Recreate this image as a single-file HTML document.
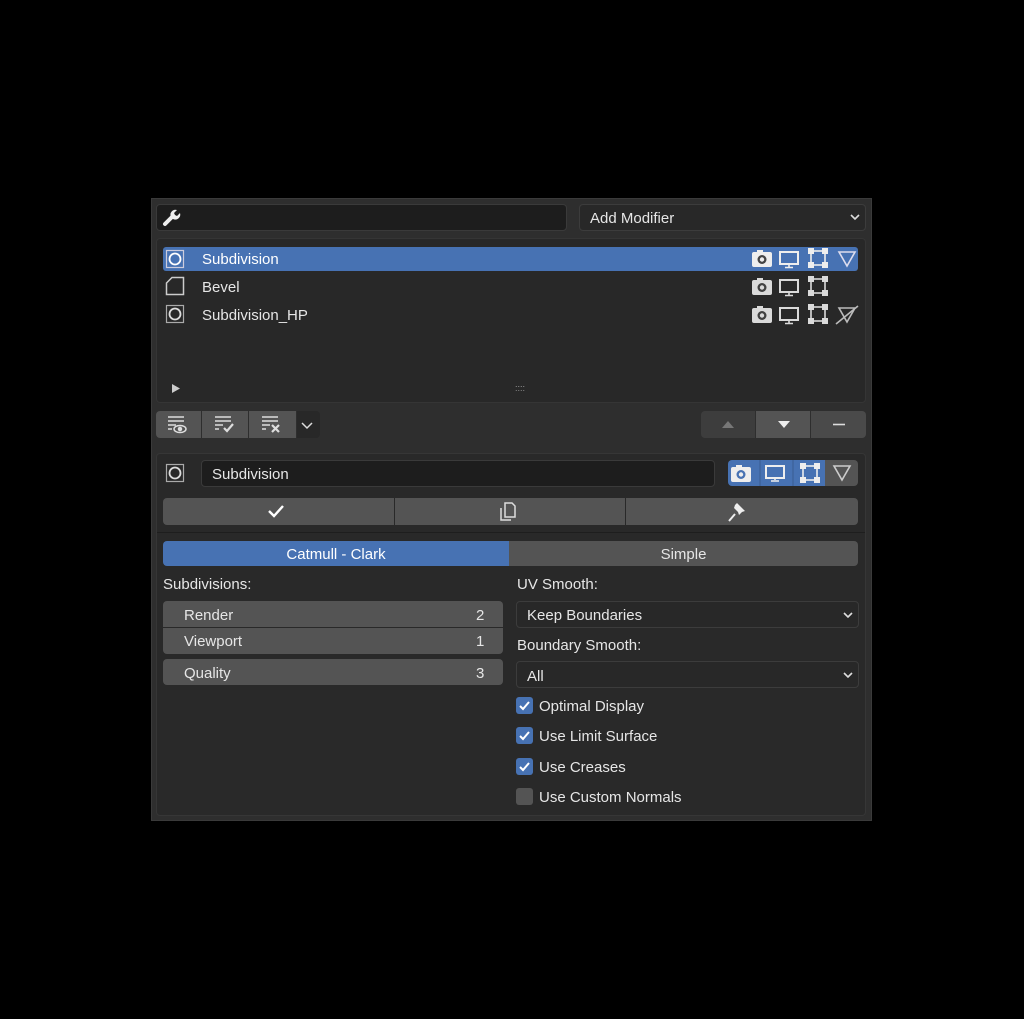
<!DOCTYPE html>
<html><head><style>
body{margin:0;width:1024px;height:1019px;background:#000;position:relative;font-family:"Liberation Sans",sans-serif;color:#e6e6e6;font-size:15px;overflow:hidden}
div{position:absolute;box-sizing:border-box}
.t{white-space:nowrap;line-height:1;margin-top:1px}
.btn{background:#545454;border-radius:4px}
.dk{background:#1d1d1d;border-radius:4px;border:1px solid #3a3a3a}
.dd{background:#282828;border-radius:4px;border:1px solid #3c3c3c}
.blue{background:#4772b3}
svg{position:absolute}
.cb{width:17px;height:17px;border-radius:3px;background:#4772b3}
</style></head><body>
<div style="left:151px;top:198px;width:721px;height:623px;background:#2e2e2e;border:1px solid #3a3a3a"></div>
<div class="dk" style="left:156px;top:204px;width:411px;height:27px"></div>
<svg style="left:162px;top:207px" width="20" height="20" viewBox="0 0 20 20"><path d="M3 17 L10 10" stroke="#eee" stroke-width="4" stroke-linecap="round"/><path d="M9 10 a5 5 0 0 1 6-7 l-3 3 1 2 2 1 3-3 a5 5 0 0 1-7 6z" fill="#eee"/></svg>
<div class="dd" style="left:579px;top:204px;width:287px;height:27px"></div>
<div class="t" style="left:590px;top:210px">Add Modifier</div>
<svg style="left:850px;top:213px" width="10" height="8"><path d="M1 2 L5 6 L9 2" stroke="#ddd" stroke-width="1.6" fill="none"/></svg>
<div style="left:156px;top:238px;width:710px;height:165px;background:#282828;border-radius:4px;border:1px solid #353535"></div>
<div class="blue" style="left:163px;top:247px;width:695px;height:24px;border-radius:3px"></div>
<svg style="left:165px;top:249px" width="20" height="20"><rect x="1.5" y="1.5" width="17" height="17" fill="none" stroke="#ccd" stroke-width="1.2"/><circle cx="10" cy="10" r="5.5" fill="none" stroke="#fff" stroke-width="1.8"/></svg>
<svg style="left:165px;top:276px" width="20" height="20"><path d="M7 1.5 H18.5 V18.5 H1.5 V7 Z" fill="none" stroke="#ccc" stroke-width="1.5"/></svg>
<svg style="left:165px;top:304px" width="20" height="20"><rect x="1.5" y="1.5" width="17" height="17" fill="none" stroke="#aaa" stroke-width="1.2"/><circle cx="10" cy="10" r="5.5" fill="none" stroke="#ddd" stroke-width="1.8"/></svg>
<div class="t" style="left:202px;top:251px;color:#fff">Subdivision</div>
<div class="t" style="left:202px;top:279px">Bevel</div>
<div class="t" style="left:202px;top:307px">Subdivision_HP</div>
<svg style="left:750px;top:248px" width="112" height="80">
<g id="r"><rect x="2" y="4" width="20" height="15" rx="2" fill="#eee"/><rect x="7" y="2" width="6" height="3" fill="#eee"/><circle cx="12" cy="11.5" r="4.5" fill="#444"/><circle cx="12" cy="11.5" r="2.2" fill="#eee"/>
<rect x="30" y="4" width="18" height="12" fill="none" stroke="#eee" stroke-width="2"/><path d="M39 16v3M35 19.5h8" stroke="#eee" stroke-width="1.6"/>
<rect x="61" y="3" width="14" height="14" fill="none" stroke="#eee" stroke-width="1.6"/><g fill="#eee"><rect x="58" y="0" width="6" height="6"/><rect x="72" y="0" width="6" height="6"/><rect x="58" y="14" width="6" height="6"/><rect x="72" y="14" width="6" height="6"/></g></g>
<path d="M89 4 L105 4 L97 18 Z" fill="none" stroke="#dde" stroke-width="1.6"/>
<use href="#r" y="28" opacity="0.9"/>
<use href="#r" y="56" opacity="0.9"/>
<path d="M89 60 L105 60 L97 74 Z M86 76 L108 58" fill="none" stroke="#bbb" stroke-width="1.6"/>
</svg>
<svg style="left:172px;top:384px" width="8" height="9"><path d="M0 0 L8 4.5 L0 9Z" fill="#ccc"/></svg>
<div class="t" style="left:515px;top:383px;font-size:9px;color:#999">::::</div>
<div class="btn" style="left:156px;top:411px;width:45px;height:27px;border-radius:4px 0 0 4px"></div>
<div class="btn" style="left:202px;top:411px;width:46px;height:27px;border-radius:0"></div>
<div class="btn" style="left:249px;top:411px;width:47px;height:27px;border-radius:0"></div>
<div style="left:297px;top:411px;width:23px;height:27px;background:#282828;border-radius:0 4px 4px 0"></div>
<svg style="left:166px;top:414px" width="150" height="22" stroke="#ddd" stroke-width="1.5" fill="none">
<path d="M2 3h16M2 7h16M2 11h8M2 15h4"/><ellipse cx="14" cy="15" rx="6" ry="3.5"/><circle cx="14" cy="15" r="1.5" fill="#ddd"/>
<path d="M49 3h16M49 7h16M49 11h8M49 15h4"/><path d="M58 14l3 3 6-7" stroke-width="2.2"/>
<path d="M96 3h16M96 7h16M96 11h8M96 15h4"/><path d="M106 11l7 7M113 11l-7 7" stroke-width="2.2"/>
<path d="M136 9l5 5 5-5"/></svg>
<div class="btn" style="left:701px;top:411px;width:54px;height:27px;border-radius:4px 0 0 4px;background:#3d3d3d"></div>
<div class="btn" style="left:756px;top:411px;width:54px;height:27px;border-radius:0"></div>
<div class="btn" style="left:811px;top:411px;width:55px;height:27px;border-radius:0 4px 4px 0;background:#4a4a4a"></div>
<svg style="left:701px;top:411px" width="165" height="27"><path d="M21 17l6-7 6 7z" fill="#777"/><path d="M77 10h12l-6 7z" fill="#eee"/><path d="M132 13.5h12" stroke="#ddd" stroke-width="1.6"/></svg>
<div style="left:156px;top:453px;width:710px;height:363px;background:#292929;border-radius:4px;border:1px solid #363636"></div>
<svg style="left:165px;top:463px" width="20" height="20"><rect x="1.5" y="1.5" width="17" height="17" fill="none" stroke="#aaa" stroke-width="1.2"/><circle cx="10" cy="10" r="5.5" fill="none" stroke="#ddd" stroke-width="1.8"/></svg>
<div class="dk" style="left:201px;top:460px;width:514px;height:27px"></div>
<div class="t" style="left:212px;top:466px">Subdivision</div>
<div class="blue" style="left:728px;top:460px;width:97px;height:26px;border-radius:4px 0 0 4px"></div>
<div style="left:825px;top:460px;width:33px;height:26px;background:#545454;border-radius:0 4px 4px 0"></div>
<svg style="left:728px;top:460px" width="130" height="26">
<g transform="translate(1,3)"><rect x="2" y="4" width="20" height="15" rx="2" fill="#eee"/><rect x="7" y="2" width="6" height="3" fill="#eee"/><circle cx="12" cy="11.5" r="4.5" fill="#4772b3"/><circle cx="12" cy="11.5" r="2.2" fill="#eee"/></g>
<rect x="38" y="6" width="18" height="12" fill="none" stroke="#eee" stroke-width="2"/><path d="M47 18v2M43 21h8" stroke="#eee" stroke-width="1.6"/>
<line x1="32" y1="0" x2="32" y2="26" stroke="#3a5c90"/><line x1="65" y1="0" x2="65" y2="26" stroke="#3a5c90"/>
<rect x="75" y="6" width="14" height="14" fill="none" stroke="#eee" stroke-width="1.6"/><g fill="#eee"><rect x="72" y="3" width="6" height="6"/><rect x="86" y="3" width="6" height="6"/><rect x="72" y="17" width="6" height="6"/><rect x="86" y="17" width="6" height="6"/></g>
<path d="M106 6 L122 6 L114 20 Z" fill="none" stroke="#ccc" stroke-width="1.6"/></svg>
<div class="btn" style="left:163px;top:498px;width:231px;height:27px;border-radius:4px 0 0 4px"></div>
<div class="btn" style="left:395px;top:498px;width:230px;height:27px;border-radius:0"></div>
<div class="btn" style="left:626px;top:498px;width:232px;height:27px;border-radius:0 4px 4px 0"></div>
<svg style="left:163px;top:498px" width="695" height="27"><path d="M106 13l5 5 9-10" stroke="#fff" stroke-width="2.4" fill="none"/>
<path d="M342 5h7l3 3v11h-10z M338 10v12h10" stroke="#ddd" stroke-width="1.5" fill="none"/>
<path d="M574 5l8 8-3 1-3 3-1-3-4-4 1-3z" fill="#eee"/><path d="M572 16l-6 7" stroke="#eee" stroke-width="2"/></svg>
<div style="left:157px;top:532px;width:708px;height:1px;background:#1e1e1e"></div>
<div class="blue" style="left:163px;top:541px;width:346px;height:25px;border-radius:4px 0 0 4px"></div>
<div class="btn" style="left:509px;top:541px;width:349px;height:25px;border-radius:0 4px 4px 0"></div>
<div class="t" style="left:163px;width:346px;text-align:center;top:546px;color:#fff">Catmull - Clark</div>
<div class="t" style="left:509px;width:349px;text-align:center;top:546px">Simple</div>
<div class="t" style="left:163px;top:576px">Subdivisions:</div>
<div class="btn" style="left:163px;top:601px;width:340px;height:26px;border-radius:4px 4px 0 0"></div>
<div class="btn" style="left:163px;top:628px;width:340px;height:26px;border-radius:0 0 4px 4px"></div>
<div class="btn" style="left:163px;top:659px;width:340px;height:26px"></div>
<div class="t" style="left:184px;top:607px">Render</div><div class="t" style="left:476px;top:607px">2</div>
<div class="t" style="left:184px;top:633px">Viewport</div><div class="t" style="left:476px;top:633px">1</div>
<div class="t" style="left:184px;top:665px">Quality</div><div class="t" style="left:476px;top:665px">3</div>
<div class="t" style="left:517px;top:576px">UV Smooth:</div>
<div class="dd" style="left:516px;top:601px;width:343px;height:27px"></div>
<div class="t" style="left:527px;top:607px">Keep Boundaries</div>
<div class="t" style="left:517px;top:637px">Boundary Smooth:</div>
<div class="dd" style="left:516px;top:661px;width:343px;height:27px"></div>
<div class="t" style="left:527px;top:668px">All</div>
<svg style="left:843px;top:611px" width="10" height="70"><path d="M1 2L5 6L9 2 M1 62L5 66L9 62" stroke="#ddd" stroke-width="1.6" fill="none"/></svg>
<div class="cb" style="left:516px;top:697px"></div>
<div class="cb" style="left:516px;top:727px"></div>
<div class="cb" style="left:516px;top:758px"></div>
<div class="cb" style="left:516px;top:788px;background:#545454"></div>
<svg style="left:516px;top:697px" width="17" height="80"><path d="M4 9l3 3 6-7 M4 39l3 3 6-7 M4 70l3 3 6-7" stroke="#fff" stroke-width="2" fill="none"/></svg>
<div class="t" style="left:539px;top:698px">Optimal Display</div>
<div class="t" style="left:539px;top:728px">Use Limit Surface</div>
<div class="t" style="left:539px;top:759px">Use Creases</div>
<div class="t" style="left:539px;top:789px">Use Custom Normals</div>
</body></html>
